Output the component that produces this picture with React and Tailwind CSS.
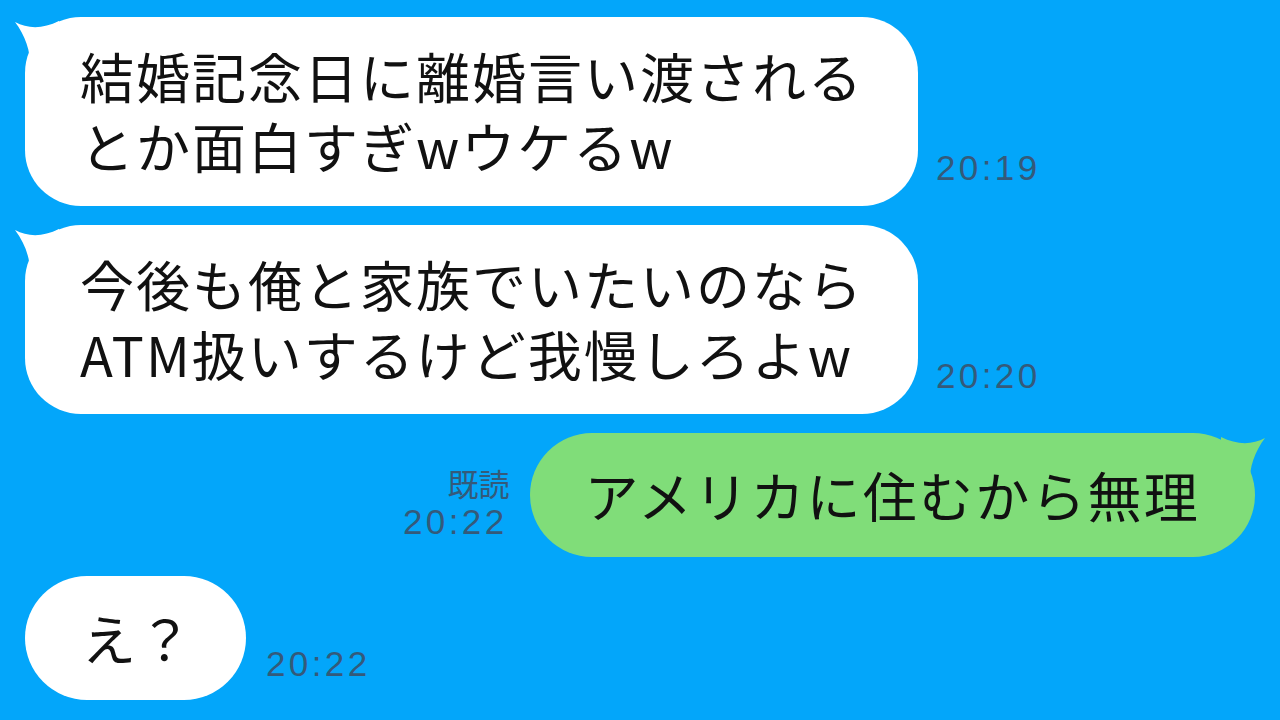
import React from "react";

const JP = { fontFamily: '"Noto Sans CJK JP", "Noto Sans", sans-serif' };
const TM = { fontFamily: '"Liberation Sans", Arial, sans-serif' };

function LeftTail() {
  return (
    <svg className="absolute left-[-12px] top-0" width="60" height="60" viewBox="0 0 60 60">
      <path d="M2 5 C 15 12, 30 12, 46 4 L 46 50 L 17 50 C 18 35, 12 18, 2 5 Z" fill="#ffffff" />
    </svg>
  );
}

function RightTail() {
  return (
    <svg className="absolute right-[-12px] top-0" width="60" height="60" viewBox="0 0 60 60">
      <path d="M58 5 C 45 12, 30 12, 14 4 L 14 50 L 43 50 C 42 35, 48 18, 58 5 Z" fill="#80dd79" />
    </svg>
  );
}

function Time({ children }) {
  return (
    <div className="text-[35px] leading-[40px] tracking-[3.4px] text-[#345a7a]" style={TM}>
      {children}
    </div>
  );
}

const bubbleText = "text-[54px] leading-[70px] tracking-[2px] text-[#111] whitespace-nowrap";

export default function App() {
  return (
    <div className="w-[1280px] h-[720px] bg-[#03a6fa] overflow-hidden flex flex-col pt-[17px] pl-[25px] pr-[25px] gap-[19px]" style={JP}>
      <div className="flex items-end gap-[18px]">
        <div className={"relative bg-white rounded-[56px] pl-[55px] pr-[54px] pt-[24px] pb-[25px] " + bubbleText}>
          <LeftTail />
          <div className="relative">
            <div>結婚記念日に離婚言い渡される</div>
            <div>とか面白すぎwウケるw</div>
          </div>
        </div>
        <div className="pb-[18px]"><Time>20:19</Time></div>
      </div>

      <div className="flex items-end gap-[18px]">
        <div className={"relative bg-white rounded-[56px] pl-[55px] pr-[54px] pt-[24px] pb-[25px] " + bubbleText}>
          <LeftTail />
          <div className="relative">
            <div>今後も俺と家族でいたいのなら</div>
            <div>ATM扱いするけど我慢しろよw</div>
          </div>
        </div>
        <div className="pb-[18px]"><Time>20:20</Time></div>
      </div>

      <div className="flex items-end justify-end gap-[22px]">
        <div className="pb-[15px] flex flex-col items-end">
          <div className="text-[31px] leading-[38px] text-[#345a7a] mr-[-2px]" style={JP}>既読</div>
          <Time>20:22</Time>
        </div>
        <div className="relative bg-[#80dd79] rounded-[62px] pl-[55px] pr-[55px] pt-[27px] pb-[27px] text-[54px] leading-[70px] tracking-[2.2px] text-[#111] whitespace-nowrap">
          <RightTail />
          <div className="relative">アメリカに住むから無理</div>
        </div>
      </div>

      <div className="flex items-end gap-[20px]">
        <div className={"relative bg-white rounded-[62px] pl-[57px] pr-[52px] pt-[27px] pb-[27px] " + bubbleText}>
          <div className="relative">え？</div>
        </div>
        <div className="pb-[16px]"><Time>20:22</Time></div>
      </div>
    </div>
  );
}
